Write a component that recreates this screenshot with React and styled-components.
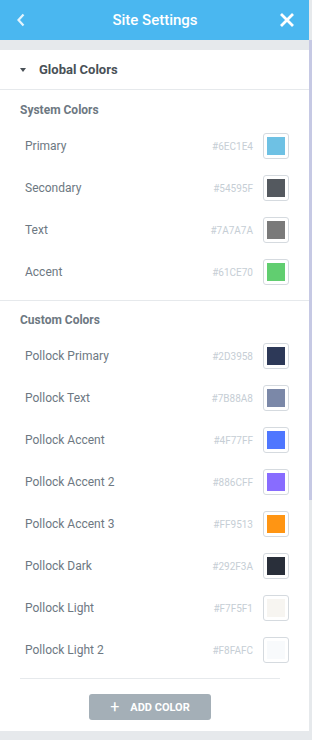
import styled, { createGlobalStyle } from "styled-components";

const GlobalStyle = createGlobalStyle`
  html, body {
    margin: 0;
    padding: 0;
    background: #e6e9ec;
    font-family: Roboto, "Liberation Sans", Arial, sans-serif;
  }
`;

const systemColors = [
    { name: "Primary", hex: "#6EC1E4" },
    { name: "Secondary", hex: "#54595F" },
    { name: "Text", hex: "#7A7A7A" },
    { name: "Accent", hex: "#61CE70" },
];

const customColors = [
    { name: "Pollock Primary", hex: "#2D3958" },
    { name: "Pollock Text", hex: "#7B88A8" },
    { name: "Pollock Accent", hex: "#4F77FF" },
    { name: "Pollock Accent 2", hex: "#886CFF" },
    { name: "Pollock Accent 3", hex: "#FF9513" },
    { name: "Pollock Dark", hex: "#292F3A" },
    { name: "Pollock Light", hex: "#F7F5F1" },
    { name: "Pollock Light 2", hex: "#F8FAFC" },
];

const ColorRow = ({ name, hex }) => (
    <Row>
        <Label>{name}</Label>
        <Hex>{hex}</Hex>
        <Swatch>
            <SwatchFill color={hex} />
        </Swatch>
    </Row>
);

const App = () => {
    return <Page>
            <GlobalStyle />
            <Main>
                <Header>
                    <IconButton aria-label="back">
                        <svg width="10" height="14" viewBox="0 0 10 14">
                            <path d="M7.5 1.5 L2.5 7 L7.5 12.5" fill="none" stroke="rgba(255,255,255,0.85)" strokeWidth="2.2" />
                        </svg>
                    </IconButton>
                    <Title>Site Settings</Title>
                    <IconButton aria-label="close">
                        <svg width="16" height="16" viewBox="0 0 16 16">
                            <path d="M2 2 L14 14 M14 2 L2 14" fill="none" stroke="#fff" strokeWidth="2.8" />
                        </svg>
                    </IconButton>
                </Header>
                <Gap />
                <Panel>
                    <SectionHead>
                        <Caret />
                        <SectionTitle>Global Colors</SectionTitle>
                    </SectionHead>
                    <Group>
                        <GroupTitle>System Colors</GroupTitle>
                        {systemColors.map((c) => <ColorRow key={c.name} {...c} />)}
                    </Group>
                    <Group $bordered>
                        <GroupTitle>Custom Colors</GroupTitle>
                        {customColors.map((c) => <ColorRow key={c.name} {...c} />)}
                        <Divider />
                        <AddButton>
                            <Plus>+</Plus>
                            ADD COLOR
                        </AddButton>
                    </Group>
                </Panel>
            </Main>
            <Scrollbar>
                <Thumb />
            </Scrollbar>
        </Page>
}

const Page = styled.div`
    display: flex;
    width: 312px;
    height: 740px;
    overflow: hidden;
`;

const Main = styled.div`
    flex: 1;
    display: flex;
    flex-direction: column;
`;

const Header = styled.div`
    height: 40px;
    background: #4ab7f0;
    display: flex;
    align-items: center;
    justify-content: space-between;
    padding: 0 10px 0 10px;
    box-sizing: border-box;
`;

const IconButton = styled.div`
    width: 22px;
    height: 22px;
    display: flex;
    align-items: center;
    justify-content: center;
    &:last-child {
        margin-right: 1px;
    }
`;

const Title = styled.div`
    color: #fff;
    font-size: 15px;
    font-weight: 500;
    padding-left: 2px;
`;

const Gap = styled.div`
    height: 10px;
`;

const Panel = styled.div`
    background: #fff;
    height: 681px;
`;

const SectionHead = styled.div`
    height: 39px;
    display: flex;
    align-items: center;
    padding-left: 20px;
    border-bottom: 1px solid #e6e9ec;
`;

const Caret = styled.span`
    width: 0;
    height: 0;
    border-left: 3.5px solid transparent;
    border-right: 3.5px solid transparent;
    border-top: 4px solid #495157;
    margin-right: 13px;
    margin-top: 1px;
`;

const SectionTitle = styled.div`
    font-size: 13px;
    font-weight: 700;
    color: #495157;
`;

const Group = styled.div`
    padding: 0 20px;
    padding-top: ${(p) => (p.$bordered ? "12px" : "13px")};
    padding-bottom: ${(p) => (p.$bordered ? "0" : "7px")};
    border-top: ${(p) => (p.$bordered ? "1px solid #e6e9ec" : "none")};
`;

const GroupTitle = styled.div`
    font-size: 12px;
    font-weight: 700;
    color: #6d7882;
    height: 15px;
    line-height: 15px;
    margin-bottom: 7px;
`;

const Row = styled.div`
    height: 42px;
    display: flex;
    align-items: center;
    padding-left: 5px;
`;

const Label = styled.div`
    flex: 1;
    font-size: 12px;
    color: #6d7882;
`;

const Hex = styled.div`
    font-size: 10px;
    color: #c6ced5;
    margin-right: 10px;
`;

const Swatch = styled.div`
    width: 26px;
    height: 26px;
    box-sizing: border-box;
    border: 1px solid #d5dadf;
    border-radius: 3px;
    padding: 3px;
    background: #fff;
`;

const SwatchFill = styled.div`
    width: 100%;
    height: 100%;
    background: ${(p) => p.color};
`;

const Divider = styled.div`
    border-top: 1px solid #e6e9ec;
    margin: 7px 9px 0 0;
`;

const AddButton = styled.div`
    width: 122px;
    height: 26px;
    margin: 15px 0 0 69px;
    background: #a4afb7;
    border-radius: 3px;
    color: #fff;
    font-size: 11px;
    font-weight: 700;
    display: flex;
    align-items: center;
    justify-content: center;
`;

const Plus = styled.span`
    font-size: 16px;
    font-weight: 400;
    margin-right: 11px;
    line-height: 1;
`;

const Scrollbar = styled.div`
    width: 3px;
    background: #e6e9ec;
    padding-top: 40px;
`;

const Thumb = styled.div`
    height: 460px;
    background: #c6c9e4;
`;

export default App;
